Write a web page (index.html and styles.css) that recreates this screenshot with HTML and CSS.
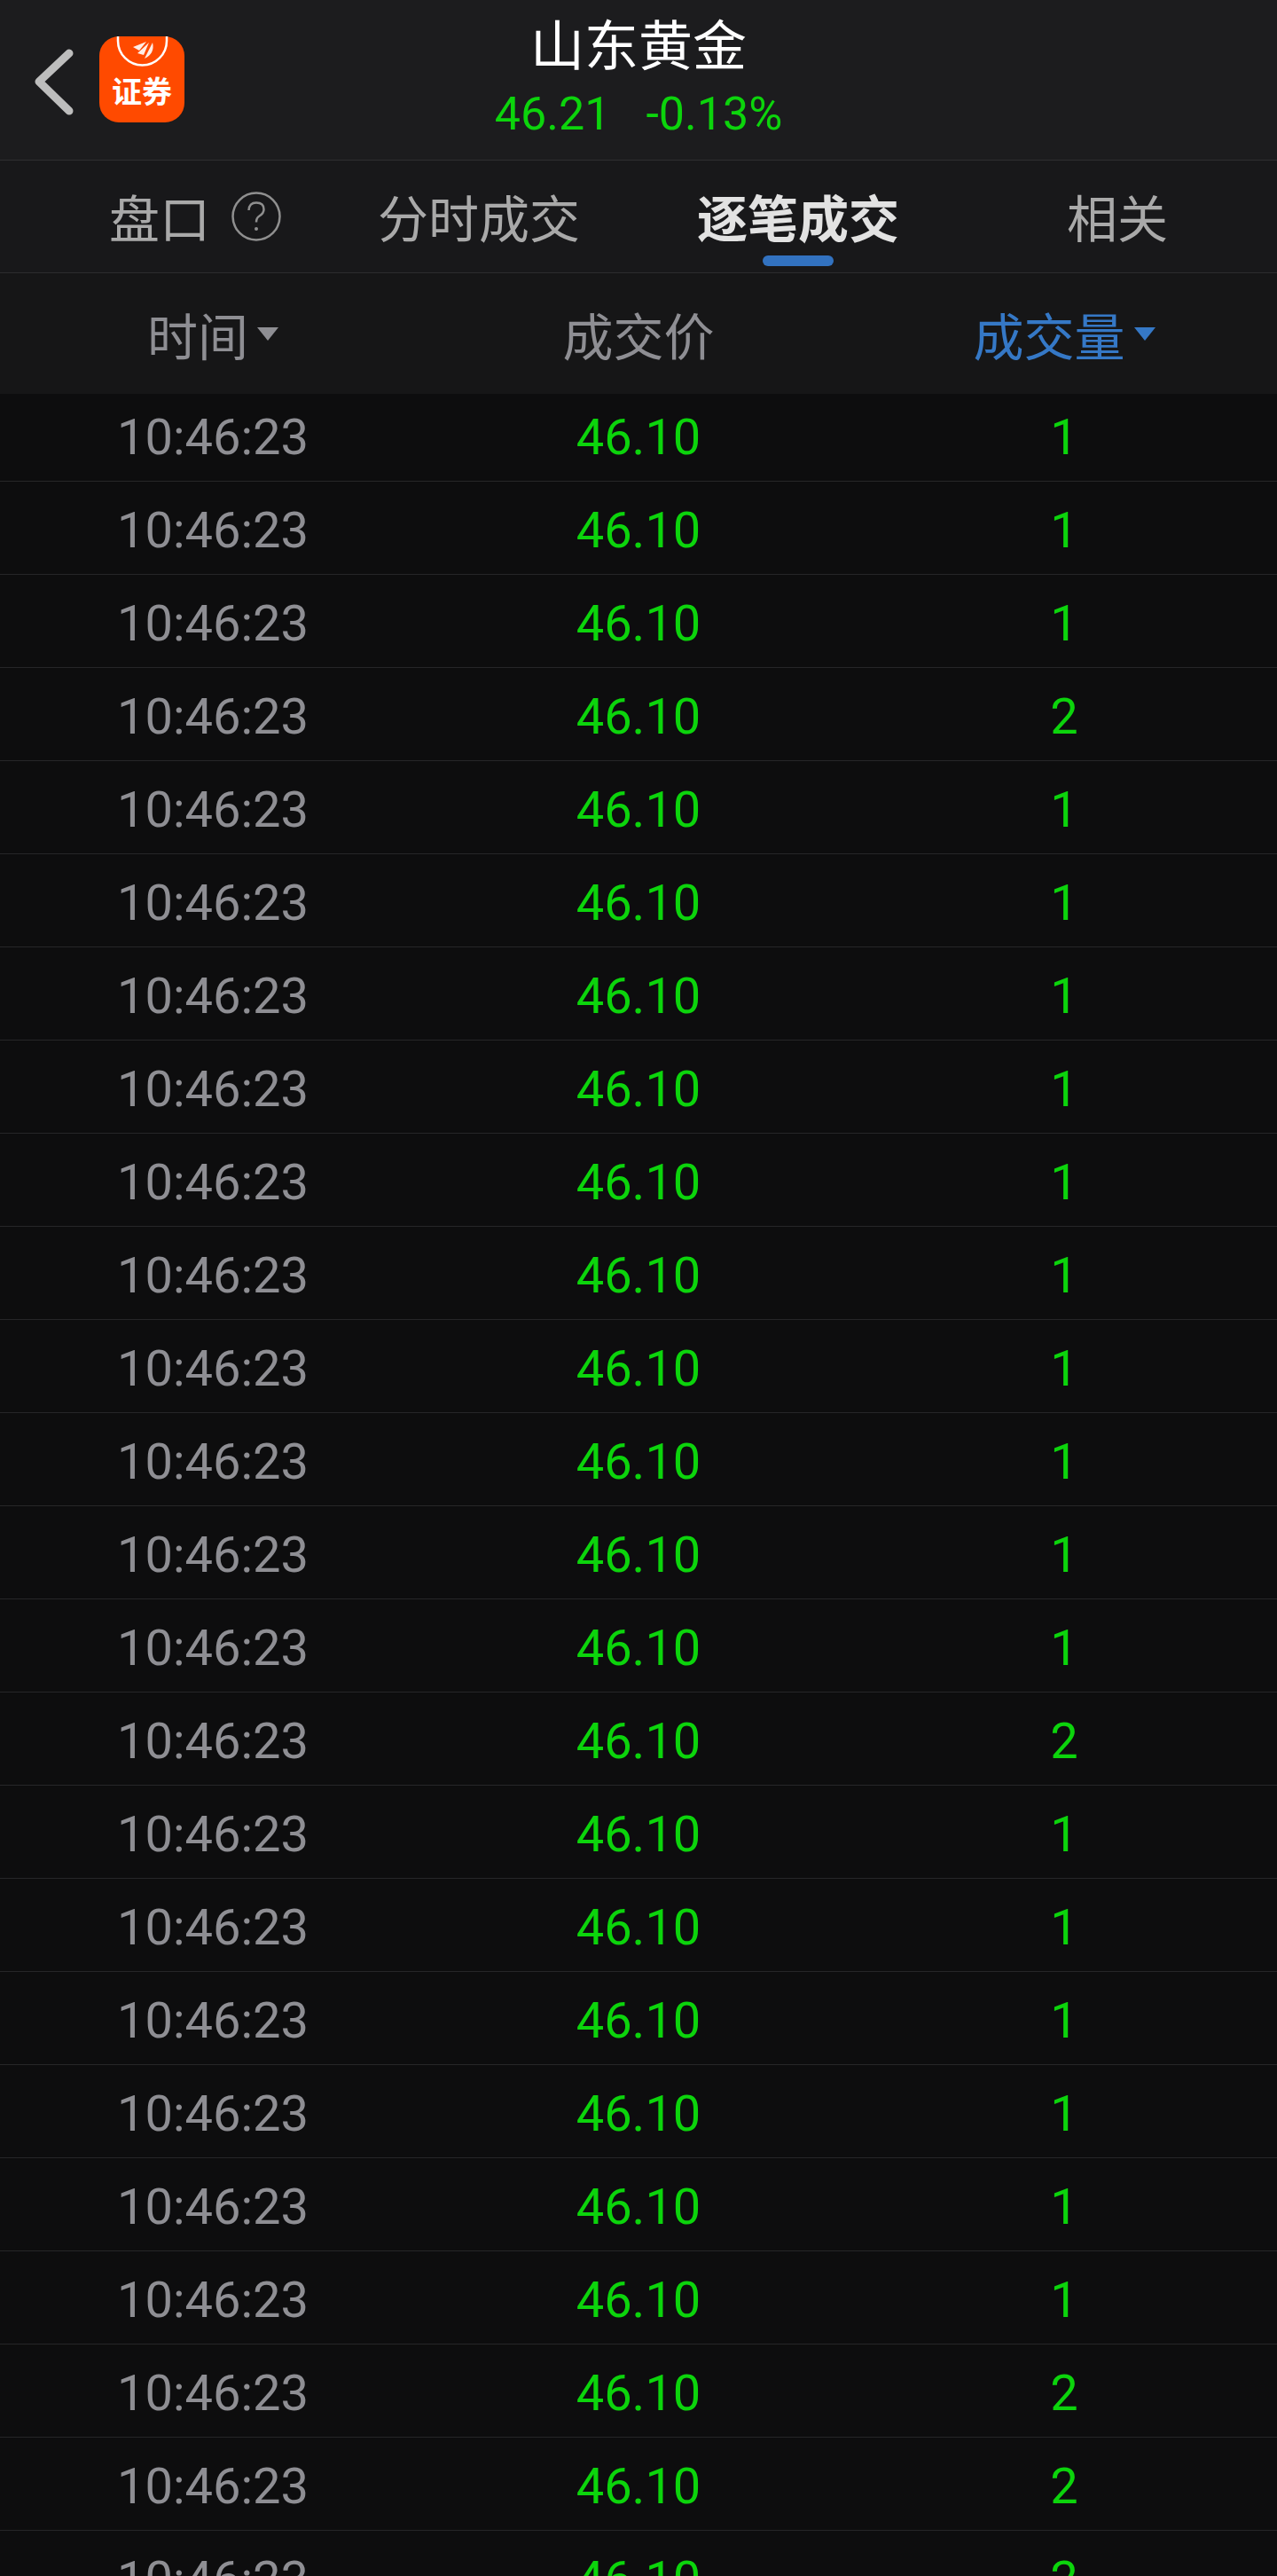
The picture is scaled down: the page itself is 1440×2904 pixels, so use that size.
FILE: index.html
```html
<!DOCTYPE html>
<html lang="zh-CN">
  <head>
    <meta charset="UTF-8" />
    <meta name="viewport" content="width=device-width, initial-scale=1.0" />
    <title>山东黄金</title>
    <link rel="stylesheet" href="styles.css">
  </head>
  <body>
    <header class="topbar">
      <div class="topbar-left">
        <svg class="back-icon" width="48" height="76" viewBox="0 0 48 76">
          <path d="M40 6 L6 38 L40 71" fill="none" stroke="#bdbdbd" stroke-width="9" stroke-linecap="round" stroke-linejoin="round" />
        </svg>
        <svg class="logo" width="96" height="97" viewBox="0 0 96 97">
          <rect width="96" height="97" rx="22" fill="#ff4a00" />
          <path d="M21 0 L21 5 A27.500 27.500 0 0 0 76 5 L76 0" fill="none" stroke="#fff" stroke-width="2.500" />
          <path d="M38 12 L53 6 L45 16 Z M43 19 L56 7 L50 21 Z M51 25 L60 7 Q63 19 51 25 Z" fill="#fff" opacity="0.9" />
          <text class="logo-text" x="48" y="75" text-anchor="middle">证券</text>
        </svg>
      </div>
      <div class="stock-name">山东黄金</div>
      <div class="stock-quote"><span>46.21</span><span>-0.13%</span></div>
    </header>

    <nav class="tabs">
      <div class="tab">盘口
        <svg class="help-icon" width="58" height="58" viewBox="0 0 58 58">
          <circle cx="29" cy="29" r="26.500" fill="none" stroke="#8f8f8f" stroke-width="2.500" />
          <path d="M20.500 22 Q21 13.500 29 13.500 Q37.500 13.500 37.500 21 Q37.500 25.500 32.500 28.500 Q29 30.500 29 35.500" fill="none" stroke="#8f8f8f" stroke-width="2.500" />
          <circle cx="29" cy="43" r="2" fill="#8f8f8f" />
        </svg>
      </div>
      <div class="tab">分时成交</div>
      <div class="tab active">逐笔成交</div>
      <div class="tab">相关</div>
    </nav>

    <div class="table-head">
      <div class="head-cell">时间<i class="arrow"></i></div>
      <div class="head-cell">成交价</div>
      <div class="head-cell sorted">成交量<i class="arrow"></i></div>
    </div>

    <div class="trades">
      <div class="trades-inner">
        <div class="row"><span class="time">10:46:23</span><span class="num">46.10</span><span class="num">1</span></div>
        <div class="row"><span class="time">10:46:23</span><span class="num">46.10</span><span class="num">1</span></div>
        <div class="row"><span class="time">10:46:23</span><span class="num">46.10</span><span class="num">1</span></div>
        <div class="row"><span class="time">10:46:23</span><span class="num">46.10</span><span class="num">2</span></div>
        <div class="row"><span class="time">10:46:23</span><span class="num">46.10</span><span class="num">1</span></div>
        <div class="row"><span class="time">10:46:23</span><span class="num">46.10</span><span class="num">1</span></div>
        <div class="row"><span class="time">10:46:23</span><span class="num">46.10</span><span class="num">1</span></div>
        <div class="row"><span class="time">10:46:23</span><span class="num">46.10</span><span class="num">1</span></div>
        <div class="row"><span class="time">10:46:23</span><span class="num">46.10</span><span class="num">1</span></div>
        <div class="row"><span class="time">10:46:23</span><span class="num">46.10</span><span class="num">1</span></div>
        <div class="row"><span class="time">10:46:23</span><span class="num">46.10</span><span class="num">1</span></div>
        <div class="row"><span class="time">10:46:23</span><span class="num">46.10</span><span class="num">1</span></div>
        <div class="row"><span class="time">10:46:23</span><span class="num">46.10</span><span class="num">1</span></div>
        <div class="row"><span class="time">10:46:23</span><span class="num">46.10</span><span class="num">1</span></div>
        <div class="row"><span class="time">10:46:23</span><span class="num">46.10</span><span class="num">2</span></div>
        <div class="row"><span class="time">10:46:23</span><span class="num">46.10</span><span class="num">1</span></div>
        <div class="row"><span class="time">10:46:23</span><span class="num">46.10</span><span class="num">1</span></div>
        <div class="row"><span class="time">10:46:23</span><span class="num">46.10</span><span class="num">1</span></div>
        <div class="row"><span class="time">10:46:23</span><span class="num">46.10</span><span class="num">1</span></div>
        <div class="row"><span class="time">10:46:23</span><span class="num">46.10</span><span class="num">1</span></div>
        <div class="row"><span class="time">10:46:23</span><span class="num">46.10</span><span class="num">1</span></div>
        <div class="row"><span class="time">10:46:23</span><span class="num">46.10</span><span class="num">2</span></div>
        <div class="row"><span class="time">10:46:23</span><span class="num">46.10</span><span class="num">2</span></div>
        <div class="row"><span class="time">10:46:23</span><span class="num">46.10</span><span class="num">2</span></div>
      </div>
    </div>
  </body>
</html>
```

FILE: styles.css
```css
html,
body {
  margin: 0;
  padding: 0;
  height: 2904px;
  overflow: hidden;
}
body {
  font-family: Roboto, "Noto Sans CJK SC", sans-serif;
  background-color: #0d0d0e;
}
.topbar {
  position: relative;
  box-sizing: border-box;
  height: 181px;
  padding-top: 15px;
  background-color: #1c1c1e;
  border-bottom: 1px solid #2e2e30;
  text-align: center;
}
.topbar-left {
  position: absolute;
  left: 38px;
  top: 41px;
  display: flex;
  align-items: flex-start;
  gap: 26px;
}
.back-icon {
  margin-top: 13px;
}
.logo {
  display: block;
}
.logo-text {
  font-size: 34px;
  font-weight: 700;
  fill: #fff;
}
.stock-name {
  font-size: 61px;
  line-height: 76px;
  color: #fff;
}
.stock-quote {
  display: flex;
  justify-content: center;
  gap: 40px;
  margin-top: 7px;
  font-size: 52px;
  line-height: 62px;
  color: #0cd40c;
}
.tabs {
  box-sizing: border-box;
  height: 127px;
  display: grid;
  grid-template-columns: repeat(4, 1fr);
  background-color: #18181a;
  border-bottom: 1px solid #2c2c2e;
}
.tab {
  position: relative;
  padding-top: 10px;
  text-align: center;
  font-size: 57px;
  line-height: 116px;
  color: #a9a9a9;
}
.tab.active {
  font-weight: 700;
  color: #e2e2e2;
}
.tab.active::after {
  content: "";
  position: absolute;
  left: 140px;
  top: 107px;
  width: 80px;
  height: 12px;
  border-radius: 6px;
  background-color: #3272c0;
}
.help-icon {
  position: absolute;
  left: 260px;
  top: 34px;
}
.table-head {
  height: 136px;
  display: grid;
  grid-template-columns: repeat(3, 1fr);
  background-color: #161617;
}
.head-cell {
  display: flex;
  justify-content: center;
  align-items: center;
  gap: 10px;
  font-size: 57px;
  color: #8e8e93;
}
.head-cell.sorted {
  color: #3578c6;
}
.arrow {
  width: 0;
  height: 0;
  border-left: 12px solid transparent;
  border-right: 12px solid transparent;
  border-top: 15px solid currentColor;
}
.trades {
  height: 2460px;
  overflow: hidden;
}
.trades-inner {
  margin-top: -6px;
}
.row {
  box-sizing: border-box;
  height: 105px;
  padding-top: 7px;
  display: grid;
  grid-template-columns: repeat(3, 1fr);
  border-bottom: 1px solid #262628;
  text-align: center;
  font-size: 56px;
  line-height: 97px;
}
.time {
  color: #8e8e93;
}
.num {
  color: #0cd40c;
}
```
